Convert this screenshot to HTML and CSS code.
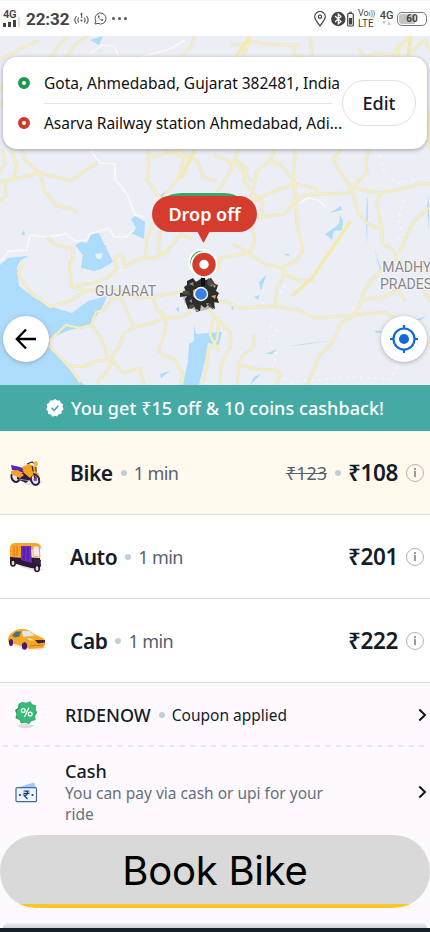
FILE: index.html
```html
<!DOCTYPE html>
<html lang="en">
<head>
<meta charset="utf-8">
<meta name="viewport" content="width=device-width, initial-scale=1">
<title>Book a ride</title>
<link rel="stylesheet" href="styles.css">
</head>
<body>
<main class="screen">
  <header class="status">
    <div class="signal"><span class="net">4G</span><span class="bars"><i></i><i></i><i></i><i class="off"></i></span></div>
    <span class="clock">22:32</span>
    <svg class="hotspot" width="15" height="14" viewBox="0 0 15 14" fill="none" stroke="#555" stroke-width="1.1"><path d="M2.500 4Q-.8 8 2.500 12M4.800 5.500Q3 8 4.800 10.500M12.500 4Q15.800 8 12.500 12M10.200 5.500Q12 8 10.200 10.500M6.500 2.500L7.700 1.500V6"/><circle cx="7.500" cy="8.500" r=".5"/></svg>
    <svg class="whatsapp" width="13" height="13" viewBox="0 0 13 13" fill="none" stroke="#555"><path d="M1 12L1.800 9.300A5.500 5.500 0 1 1 4 11.400Z"/><path d="M4 3.500Q3.500 5 5.300 7T9 9L9.400 7.700 8 7 7.200 7.700Q5.500 6.700 5 5.400L5.700 4.700 5.200 3.300Z" fill="#555" stroke="none"/></svg>
    <span class="dots"><i></i><i></i><i></i></span>
    <div class="status-right">
      <svg width="12" height="16" viewBox="0 0 12 16" fill="none" stroke="#444" stroke-width="1.2"><path d="M6 15C4 11.500.700 9 .700 5.800a5.300 5.300 0 0 1 10.600 0C11.300 9 8 11.500 6 15Z"/><circle cx="6" cy="5.800" r="1.600"/></svg>
      <svg class="bt" width="23" height="16" viewBox="0 0 23 16"><circle cx="7.300" cy="8" r="7.200" fill="#444"/><path d="M4 5L10 10.500 7.300 13V3L10 5.500 4 11" fill="none" stroke="#fff" stroke-width="1.200"/><rect x="16.700" y="2.500" width="5.600" height="12.500" rx="1" fill="#fff" stroke="#444" stroke-width="1.200"/><path d="M18 .800h3v1h-3zM18 7h3v6.500h-3z" fill="#444"/></svg>
      <div class="volte"><span>Vo<small>ı))</small></span><span>LTE</span></div>
      <div class="data"><span>4G</span><svg width="9" height="4" viewBox="0 0 9 4" fill="#ccc"><path d="M0 0h4L2 4zM5 4h4L7 0z"/></svg></div>
      <div class="battery"><b>60</b></div>
    </div>
  </header>

  <section class="map">
    <svg class="map-art" viewBox="0 36 430 349" width="430" height="349">
      <rect y="36" width="430" height="349" fill="#eceef6"/>
      <g fill="#aedcfc">
        <path d="M0 265L8 258 28 256 20 261 17 268 19 286 36 299 52 307 72 313 88 301 107 296 103 306 90 325 70 330 50 338 50 348 84 385H0Z"/>
        <path d="M75 245L81 242 87 243 91 234 99 233 113 262 101 269 94 271 81 268 83 255Z"/>
        <path d="M131 219L135 216 145 222 144 239 131 233 136 228Z"/>
        <path d="M194 325L196 334 222 332 219 345 208 343 204 365 199 385H183L188 360 189 344 194 341Z"/>
        <path d="M21 235L24 230 25 235ZM340 215L343 220 342 230 334 231 332 240 325 234 334 228 339 224ZM330 213L341 206 342 210ZM166 190L162 200 161 195ZM49 81L58 78 61 84ZM261 291l5-16-7 7zM254 297l6-2-2 5zM367 195l1 10-1 40-1-25zM427 205l2-8v35zM90 40L103 36 99 45ZM44 80l10-4-5 6zM265 354l12-5-5 5zM250 385l11-11-7 3zM375 330l10 2-9 1zM415 320l11-4-5 4z"/>
        <path d="M289 346L340 339 302 345ZM160 374l10-3-9 7zM175 309l4-2v5zM284 254l6 0-2 2zM231 308l3-5-1 8zM100 245l8 1-5 3zM374 248l7 20-1 2z"/>
      </g>
      <path d="M95 254l8-1-2 6-4 0z" fill="#eceef6"/>
      <g fill="none" stroke="#f8f8f5" stroke-width="1.700">
        <path d="M0 262L9 251 27 250 30 235 46 237 66 234 76 241 87 240 90 234 109 228 114 237 126 237 134 230M90 150L100 163 115 164 115 179 127 194 135 215 145 217M90 53L102 45 114 46 121 60M130 60L170 49 185 40M300 203l8-5 10 2 8 7"/>
        <path d="M270 325l7 5-8 12 8 13-6 15 20 12 60-5 40 2 10-20M285 285l-15 30M380 155l5 20 15 8 20-5M404 200l-6 20 6 15-20 10" stroke-dasharray="3 4" opacity=".8"/>
      </g>
      <defs><g id="roads" fill="none" stroke-linejoin="round" stroke-linecap="round">
        <path d="M0 182L40 173 71 181 80 174 97 163M22 150L25 160 40 173 44 191 57 206 73 209 76 212M2 150L5 163 0 172M12 150L17 168 12 180M0 200L6 196 5 180M0 90L17 75 28 70 50 57 67 36M43 86L63 62 75 45 88 36M0 105L13 95 22 86M0 60L20 49 37 41"/>
        <path d="M22 265L18 274 30 292 50 307 72 300 84 292 107 287 140 298 170 294 190 290M48 238L55 245 73 249 73 258 69 265 72 287 88 291M71 287L93 283 107 278 116 270 115 257 122 255 125 267 139 259 154 258 167 252 181 234 190 238"/>
        <path d="M148 150L149 167 147 180 156 193 163 200 154 221 147 238 145 258M160 230L158 250 165 255M149 157L165 154 180 150 198 162 203 177 215 181M165 150L185 158 177 180 164 196M215 195L226 179 233 164 238 150M215 155L240 167 251 181M236 160L247 168 243 180 251 190 252 202 268 194 294 184 315 188 318 194 348 193 352 188 373 192 381 193 410 187 420 183 430 184"/>
        <path d="M253 190L257 171 270 161 275 150M270 161L281 165 293 180 295 184 297 225 303 250 296 261 282 268 286 275 300 281 313 280M295 150L293 183 297 198 285 214 255 218 246 219M297 201L305 195 317 194M250 219L255 240 251 250 248 253 235 245M218 270L220 258 248 253 265 264 282 268M260 218L263 203 255 195"/>
        <path d="M341 150L333 159 341 173 352 189 367 172 366 160 369 150M352 191L358 213 368 224 382 229 382 243 394 251 397 261 430 270M381 193L377 202 380 220 382 229M430 207L413 222 400 251M371 280L363 293 361 301 355 315 341 323 333 342 320 355 307 385M384 268L371 280M361 300L385 297 398 290 405 300M203 301L227 302 238 308 275 306 298 310 315 318 355 315 385 312 397 319 430 345M285 265L282 279 277 288 275 307M430 300L424 291"/>
        <path d="M49 341L66 325 80 328 91 325 96 312 104 310 112 299 121 296 127 312 134 327 145 325 165 318 182 317 190 311M48 345L67 364 80 382M67 365L84 367 95 361 110 360 120 345 123 334 134 327M91 325L100 337 106 350 107 360M113 361L106 373 99 379 98 385M113 361L123 373 140 368 144 385M153 298L157 309 166 318 165 333 158 351 164 355 176 361 183 375 180 385"/>
        <path d="M202 301L215 317 230 332 231 345 221 365 220 385M219 318L217 340 208 350 206 370 202 385M213 320L210 335 218 350M254 335L253 348 243 355 239 365 237 385M239 365L256 369 273 370 281 373 276 385"/>
        <path d="M215 91L230 84 242 58 250 40M232 45L255 42 265 44 287 45 298 45M293 45L295 55 305 57M310 38L312 55M360 50L365 58 377 53 398 55M395 60L401 45 410 37M396 55L398 45M410 53L425 40 430 50M184 90L182 56 192 45 194 37M428 110L430 150"/>
      </g></defs>
      <use href="#roads" stroke="#ded9b9" stroke-width="3.200" opacity=".45"/>
      <use href="#roads" stroke="#f5eebf" stroke-width="2"/>
      <path d="M181 178L195 150M292 296L312 278 350 222M236 56L250 37M407 61L411 37" fill="none" stroke="#f4e9af" stroke-width="3.500"/>
    </svg>
    <span class="place gujarat">GUJARAT</span>
    <span class="place madhya">MADHYA<br>PRADESH</span>
    <svg class="pin" width="108" height="128" viewBox="150 190 108 128">
      <path d="M163 199Q170 193 182 193H224Q235 193 241 199Z" fill="#3da568"/>
      <ellipse cx="200" cy="296" rx="17" ry="15" fill="#55534e" opacity=".3"/>
      <path d="M187 281l6-3 3 4 6-4 4 2 5-2 4 6 3 1-2 6 3 2-2 4 2 6-5-1 1 7-7-4-3 3-4-3-1 6-4 1-1-5-7 2-2-6-1-4 2-3-7 1v-4l6-1-2-5 3-2z" fill="#2c2d2b"/>
      <path d="M183 291h6l1 4-7-1zM208 278l6 4-4 5-3-3zM210 303l4 7-6-4zM188 306l5-2 2 2-4 3z" fill="#4a4d4b"/>
      <path d="M189 284l4-2 1 4zM210 285l3-1-1 3zM189 301l3-2v4zM206 303l3 0-2 3z" fill="#858988"/>
      <path d="M193 290l3-1-1 9-2-2zM213 284l3 2-2 2zM211 296l5-1-1 4zM195 309l4 1-2 2z" fill="#d79c5b"/>
      <circle cx="202" cy="262.500" r="13.700" fill="#fff"/><circle cx="202" cy="262.500" r="11.700" fill="#2d9c62"/>
      <path d="M203 274v12" stroke="#111" stroke-width="4"/>
      <circle cx="204" cy="264.500" r="13.500" fill="#fff"/><circle cx="204" cy="264.500" r="11.700" fill="#d43d2d"/><circle cx="204" cy="264.500" r="4.700" fill="#fff"/>
      <circle cx="201" cy="294" r="7.200" fill="#fff"/><circle cx="201" cy="294" r="5.800" fill="#347fe8"/>
      <path d="M197 231H210L203.500 243Z" fill="#d43d2d"/>
    </svg>
    <div class="drop">Drop off</div>

    <div class="route">
      <div class="stops">
        <div class="stop"><i class="ring green"></i><span class="from">Gota, Ahmedabad, Gujarat 382481, India</span></div>
        <div class="stop"><i class="ring red"></i><span class="to">Asarva Railway station Ahmedabad, Adi...</span></div>
      </div>
      <button class="edit">Edit</button>
    </div>
    <button class="round back" aria-label="Back"><svg width="22" height="22" viewBox="0 0 22 22" fill="none" stroke="#000" stroke-width="2.300"><path d="M21 11H2M11 1.500L1.800 11 11 20.500"/></svg></button>
    <button class="round locate" aria-label="Locate"><svg width="30" height="30" viewBox="0 0 30 30" fill="none" stroke="#1468d8" stroke-width="2.200"><circle cx="15" cy="15" r="10.500"/><circle cx="15" cy="15" r="5" fill="#1468d8" stroke="none"/><path d="M15 1v4M15 25v4M1 15h4M25 15h4"/></svg></button>
  </section>

  <section class="banner">
    <svg width="18" height="18" viewBox="0 0 18 18"><path d="M9 0l2.200 1.600 2.700-.2.900 2.500 2.400 1.300-.7 2.600 1.200 2.500-2 1.800-.3 2.700-2.700.5-1.700 2.200L9 16.700l-2.400 1-1.700-2.200-2.700-.5-.3-2.700-1.700-2L1.400 7.800.7 5.200 3.100 3.900 4 1.400l2.800.2z" fill="#fff"/><path d="M5.500 8.800l2.500 2.500 4.500-4.600" fill="none" stroke="#45aaa4" stroke-width="1.600"/></svg>
    <span>You get ₹15 off &amp; 10 coins cashback!</span>
  </section>

  <section class="ride selected">
    <svg class="vehicle" width="40" height="32" viewBox="0 0 40 32"><path d="M14 27l21-3 3 1-7 4-9-1z" fill="#e9e3ed"/><g fill="#eadfed" stroke="#2a1942" stroke-width="2"><ellipse cx="9.500" cy="20" rx="4" ry="5" transform="rotate(-20 9.500 20)"/><ellipse cx="29" cy="22.500" rx="4" ry="5.500" transform="rotate(-20 29 22.500)"/></g><path d="M11 17l12-3 3 7-6 5-9-4z" fill="#301a41"/><path d="M5 8l9 2 5 2-1 4-12-3z" fill="#5727b3"/><path d="M5 14l7-1 6 5-4 3-9-4zM16 10l7-3 7 3-1 6-5 5-6-5z" fill="#f5a41e"/><path d="M21 7l5-2 3 2M30 10l0 14M26 9l3 13" fill="none" stroke="#3a2445" stroke-width="1.200"/><path d="M27 5.500l4-1.500 1 4-3 2z" fill="#f6b233"/><path d="M25 16q5-3 8 3" fill="none" stroke="#f6a92b" stroke-width="1.500"/><circle cx="29" cy="22.500" r="1.500" fill="#715777"/><path d="M13 22l11 2" stroke="#a592a9"/></svg>
    <strong class="n-bike">Bike</strong><i class="sep"></i><span class="eta">1 min</span>
    <span class="price"><del>₹123</del><i class="sep"></i><b>₹108</b></span><i class="info"></i>
  </section>
  <section class="ride">
    <svg class="vehicle" width="40" height="32" viewBox="0 0 40 32"><path d="M8 24l31 4-8 3z" fill="#e9e5f1"/><path d="M4 15L34 17l1 8-2 3-8-1-8-2-13-4z" fill="#2b1933"/><path d="M4 6Q5 2 9 2h20q5 0 6 4l-1 3-17-1-1 9-12-1z" fill="#f5a52a"/><path d="M8 5v10M11 5v10" stroke="#dc7619"/><path d="M15 5h10l1 17-11-3z" fill="#6d28c7"/><path d="M18 6v13M22 6v14" stroke="#421c80"/><path d="M27 5h6l1 11-7-1z" fill="#eee9f2" stroke="#f5a52a"/><g fill="#e3d8dd" stroke="#26162b" stroke-width="1.600"><ellipse cx="7" cy="22" rx="2.200" ry="3"/><ellipse cx="31" cy="27.500" rx="2.200" ry="3"/></g><path d="M28 18l7 1-1 5-6-1z" fill="#35203e"/></svg>
    <strong class="n-auto">Auto</strong><i class="sep"></i><span class="eta">1 min</span>
    <span class="price"><b>₹201</b></span><i class="info"></i>
  </section>
  <section class="ride">
    <svg class="vehicle cab" width="40" height="32" viewBox="0 0 40 32"><path d="M6 22l35 2-8 3-17-1z" fill="#ebe7f1"/><path d="M3 13q3-4 7-6 5-2 12 0l8 5 7 3q3 3 2 7l-2 3-13 1-12-4-9-2q-2-3 0-7z" fill="#f6a728"/><path d="M6 12.500l4-4 5 0-2 5-4 1z" fill="#437384"/><path d="M16 8h7l6 4.500-12 1.500z" fill="#e2e6ed"/><path d="M15 8l-2 6" stroke="#b9771b" stroke-width=".8"/><path d="M29 17l10 0 0 2.500-7 1z" fill="#3b2345"/><path d="M21 15l5 1 2 2-5-1z" fill="#f8e8bd"/><g fill="#3f1b72"><ellipse cx="5" cy="19.500" rx="2" ry="3.500"/><ellipse cx="18.500" cy="23" rx="2.600" ry="3.700"/></g><path d="M24 23l13-1" stroke="#db761d"/></svg>
    <strong class="n-cab">Cab</strong><i class="sep"></i><span class="eta">1 min</span>
    <span class="price"><b>₹222</b></span><i class="info"></i>
  </section>

  <section class="extras">
    <div class="coupon">
      <svg width="24" height="28" viewBox="0 0 24 28"><ellipse cx="11.500" cy="25" rx="8" ry="2" fill="#deddE6"/><path d="M8 1l4 1 4-1.500 2 3 4 1-.5 4 1.500 3-2 3.500.5 4-4 1-2.500 3-4-1.500-4 1-1.500-3.500-4-2 1-4L1 9l3-2 .5-4z" fill="#27955a"/><path d="M8.500 1l4 1 4-1.500 2 3 3.500 1-.5 4 1.500 3-2 3.500.5 3.500-4 1-2.500 3-4-1.500-4 .5-1.500-3.500-3-2 .5-4L3 9l2-2 .5-4z" fill="#39ba77"/><g fill="none" stroke="#fff" stroke-width="1.300"><circle cx="9.300" cy="9.500" r="1.900"/><circle cx="16.200" cy="13" r="1.900"/><path d="M15 6.500l-4.500 9.500"/></g></svg>
      <span class="code">RIDENOW</span><i class="sep"></i><span class="applied">Coupon applied</span>
      <svg class="chev" width="9" height="14" viewBox="0 0 9 14"><path d="M1.300 1.500L7 7l-5.700 5.500"/></svg>
    </div>
    <svg class="dash" width="430" height="2"><path d="M3 1H426" stroke="#e3e2e6" stroke-width="1.500" stroke-dasharray="5.200 5.200"/></svg>
    <div class="cash">
      <svg width="23" height="21" viewBox="0 0 23 21"><path d="M3 5.500L19 .500 21 6z" fill="#9fc9fa"/><rect x="1" y="5.700" width="20.500" height="14" rx="1" fill="#edf4ff" stroke="#496a94" stroke-width="1.200"/><g fill="#173c70"><circle cx="5" cy="13" r="1.100"/><circle cx="17.500" cy="13" r="1.100"/></g><path d="M8.500 9h6M8.500 11.300h6M9 9q4.500 0 3.500 2.500-.5 2-3.500 1.700L12.500 17" fill="none" stroke="#173c70" stroke-width="1.200"/></svg>
      <div class="cash-copy"><span class="title">Cash</span><p>You can pay via cash or upi for your<br>ride</p></div>
      <svg class="chev" width="9" height="14" viewBox="0 0 9 14"><path d="M1.300 1.500L7 7l-5.700 5.500"/></svg>
    </div>
    <button class="book"><span>Book Bike</span></button>
    <div class="sheet-edge"></div>
  </section>
  <footer></footer>
</main>
</body>
</html>
```
FILE: styles.css
```css
* { box-sizing: border-box; }
body { margin: 0; font-family: "Noto Sans", sans-serif; color: #151c27; background: #fff; }
button { font: inherit; color: inherit; border: 0; padding: 0; }
svg { display: block; flex: none; }
i { display: block; flex: none; }
.screen { width: 430px; height: 932px; overflow: hidden; display: flex; flex-direction: column; }

.status { height: 36px; flex: none; display: flex; align-items: center; padding: 0 3px; color: #444; font-family: Roboto, sans-serif; border-top: 1px solid #f5f5f5; }
.signal { width: 19px; height: 18px; display: flex; flex-direction: column; }
.net { font-size: 11px; line-height: 9px; font-weight: 600; letter-spacing: -.3px; }
.bars { display: flex; align-items: flex-end; gap: 2px; height: 8px; }
.bars i { width: 3px; height: 4px; background: #444; }
.bars i:nth-child(2) { height: 5px; }
.bars i:nth-child(3) { height: 7px; }
.bars .off { height: 10px; width: 2px; background: #ddd; }
.clock { font-size: 17px; font-weight: 700; width: 44px; margin-left: 4px; letter-spacing: -.1px; white-space: nowrap; }
.hotspot { margin-left: 4px; }
.whatsapp { margin-left: 5px; }
.dots { display: flex; gap: 3px; margin-left: 5px; }
.dots i { width: 3px; height: 3px; border-radius: 50%; background: #555; }
.status-right { margin-left: auto; display: flex; align-items: center; }
.bt { margin-left: 5px; }
.volte { margin-left: 4px; width: 18px; font-size: 9px; line-height: 9px; display: flex; flex-direction: column; white-space: nowrap; }
.volte span:last-child { font-size: 10px; }
.volte small { font-size: 7px; }
.data { margin-left: 2px; width: 17px; font-size: 11px; line-height: 11px; font-weight: 500; display: flex; flex-direction: column; align-items: center; height: 18px; }
.battery { width: 30px; height: 14px; margin-left: 2px; border: 1px solid #777; border-radius: 5px; padding: 1px; font-size: 10px; line-height: 10px; text-align: center; background: linear-gradient(90deg, #c4c4c4 60%, #fff 60%) content-box; }

.map { position: relative; height: 349px; flex: none; overflow: hidden; padding: 21px 3px 0; }
.map-art { position: absolute; left: 0; top: 0; }
.place { position: absolute; font: 14px/17px Roboto, sans-serif; color: #85878a; text-shadow: 0 0 2px #fff, 0 0 2px #fff; white-space: nowrap; }
.gujarat { left: 95px; top: 247px; letter-spacing: .1px; }
.madhya { left: 380px; top: 223px; text-align: center; }
.pin { position: absolute; left: 150px; top: 154px; }
.drop { position: absolute; left: 152px; top: 160px; width: 105px; height: 36px; border-radius: 18px; background: #d43d2d; color: #fff; font-size: 18px; line-height: 36px; font-weight: 600; text-align: center; white-space: nowrap; }
.route { position: relative; height: 92px; border-radius: 14px; background: #fff; box-shadow: 0 1px 4px #777a; display: flex; align-items: center; padding: 0 11px 0 15px; }
.stops { width: 324px; }
.stop { display: flex; align-items: center; height: 40px; white-space: nowrap; font-size: 15.500px; color: #111; position: relative; }
.stop:first-child::after { content: ""; position: absolute; left: 26px; right: 10px; bottom: -1px; height: 1.500px; background: #dfe5e8; }
.from { letter-spacing: -.01px; }
.to { letter-spacing: -.03px; }
.ring { width: 12px; height: 12px; border: 4px solid; border-radius: 50%; margin-right: 14px; }
.green { border-color: #20984f; }
.red { border-color: #ca3b2c; }
.edit { width: 74px; height: 46px; border: 1px solid #dce2e5; border-radius: 23px; background: #fff; font-size: 18px; font-weight: 500; flex: none; }
.round { position: absolute; top: 280px; width: 46px; height: 46px; border-radius: 50%; background: #fff; display: grid; place-items: center; box-shadow: 0 1px 4px #7778; }
.back { left: 3px; }
.locate { left: 381px; }

.banner { height: 46px; flex: none; background: #45aaa4; color: #fff; display: flex; align-items: center; justify-content: center; gap: 7px; font-size: 18px; font-weight: 500; letter-spacing: .06px; white-space: nowrap; }
.ride { height: 84px; flex: none; border-bottom: 1.500px solid #d9dfe5; background: #fff; display: flex; align-items: center; padding: 0 6px; white-space: nowrap; }
.selected { background: #fffaed; }
.vehicle { margin-right: 24px; }
.cab { margin-bottom: 4px; }
.ride strong { font-size: 21px; font-weight: 600; letter-spacing: -.45px; }
.sep { width: 6px; height: 6px; border-radius: 50%; background: #c5cdd5; margin: 0 7px 0 8px; }
.eta { font-size: 18px; color: #586170; letter-spacing: -.6px; }
.price { margin-left: auto; display: flex; align-items: center; }
.price b { font-size: 22.500px; font-weight: 600; letter-spacing: -.4px; }
.price del { font-size: 18px; color: #586170; }
.info { width: 18px; height: 18px; border: 1.500px solid #b4b4b4; border-radius: 50%; margin-left: 8px; background: linear-gradient(#999, #999) center 3px / 2px 2px no-repeat, linear-gradient(#999, #999) center 6px / 2px 6px no-repeat; }

.extras { height: 245px; flex: none; background: #fdf9ff; overflow: hidden; }
.coupon { height: 62px; display: flex; align-items: center; padding: 2px 3px 0 14px; }
.code { font-size: 18px; font-weight: 500; margin-left: 27px; }
.applied { font-size: 15.500px; }
.chev { margin-left: auto; fill: none; stroke: #151515; stroke-width: 2; }
.cash { height: 88px; display: flex; align-items: center; padding: 2px 3px 0 15px; }
.cash-copy { margin-left: 27px; }
.title { display: block; font-size: 18px; line-height: 24px; font-weight: 500; }
.cash p { margin: 0; color: #667080; font-size: 15.500px; line-height: 21px; white-space: nowrap; }
.book { display: flex; align-items: center; justify-content: center; width: 430px; height: 73px; border-radius: 36px; background: linear-gradient(#d9d9d9 69px, #fdc624 69px); font: 400 40px Inter, sans-serif; letter-spacing: -.25px; color: #000; }
.book span { margin-top: -2px; }
.sheet-edge { height: 5px; margin: 15px 3px 0; border-radius: 8px 8px 0 0; background: linear-gradient(#f3eff4, #d4d2d6); }
footer { height: 4px; flex: none; background: #152027; }
```
